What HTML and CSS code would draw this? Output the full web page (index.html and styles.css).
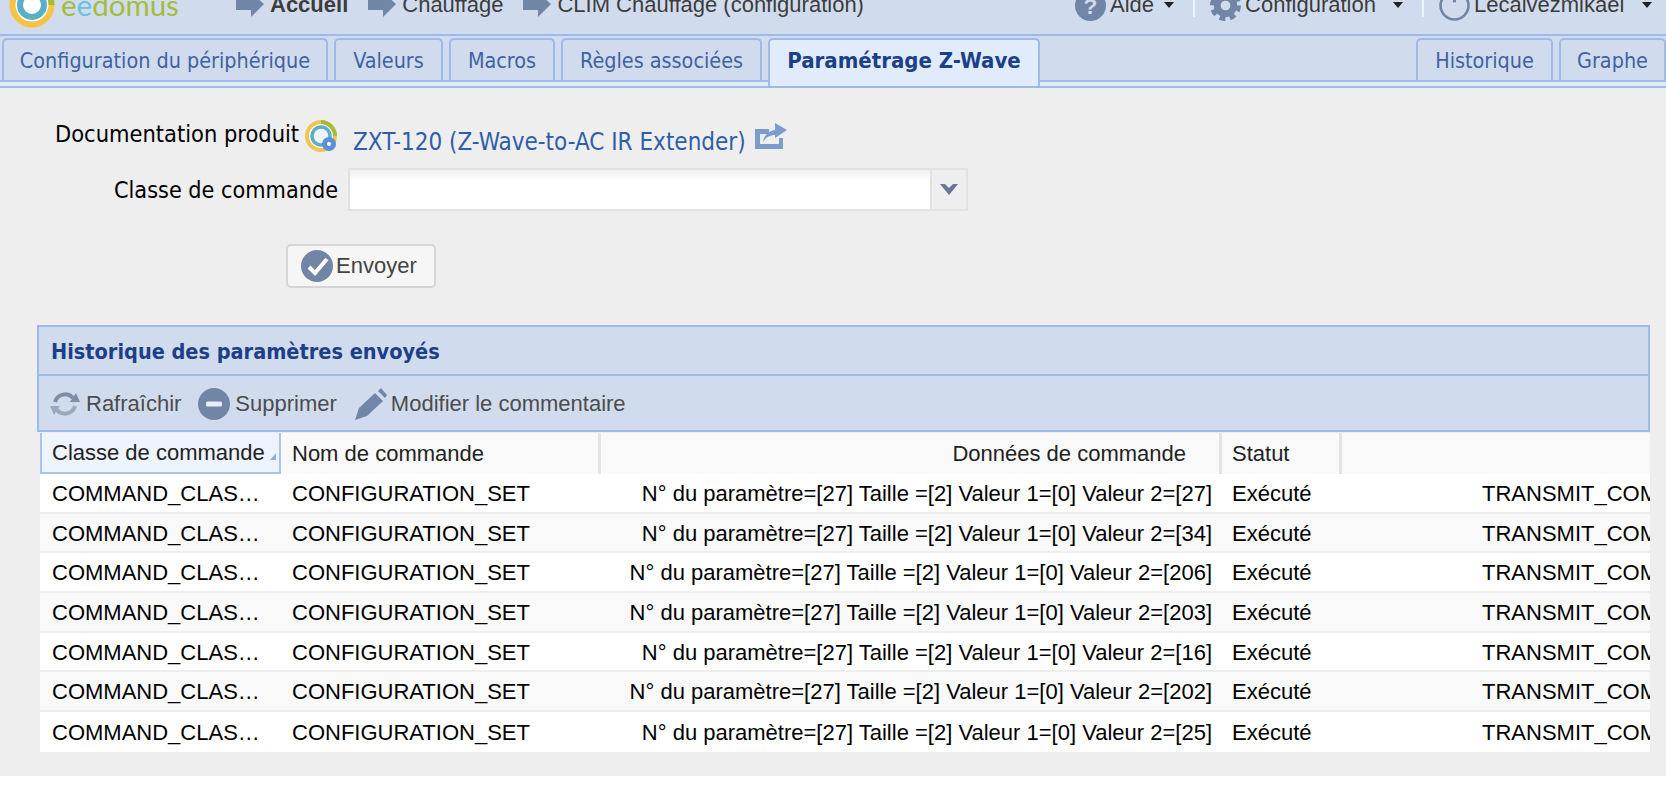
FILE: index.html
```html
<!DOCTYPE html>
<html lang="fr">
<head>
<meta charset="utf-8">
<title>Paramétrage Z-Wave</title>
<link rel="stylesheet" href="styles.css">
</head>
<body>
<header class="topbar">
  <div class="topbar-row">
    <svg class="logo" viewBox="0 0 46 46"><circle cx="23" cy="23" r="19.500" fill="#fff" stroke="#f5c445" stroke-width="6"/><path d="M23 3.500A19.500 19.500 0 0 1 42.500 23" fill="none" stroke="#a4bc3c" stroke-width="6"/><circle cx="23" cy="23" r="12" fill="#fff" stroke="#55b0c8" stroke-width="6"/></svg>
    <span class="brand">e<span class="brand-e">e</span>domus</span>
    <nav class="crumbs">
      <svg class="arrow" viewBox="0 0 28 24"><path d="M0 5H16V0L28 11 15 24V17H0Z"/></svg><b class="crumb">Accueil</b>
      <svg class="arrow" viewBox="0 0 28 24"><path d="M0 5H16V0L28 11 15 24V17H0Z"/></svg><span class="crumb">Chauffage</span>
      <svg class="arrow" viewBox="0 0 28 24"><path d="M0 5H16V0L28 11 15 24V17H0Z"/></svg><span class="crumb">CLIM Chauffage (configuration)</span>
    </nav>
    <div class="usermenu">
      <svg class="menu-icon" viewBox="0 0 30 30"><circle cx="15" cy="15" r="15" fill="#7186a6"/><text x="15" y="23" class="qmark">?</text></svg>
      <span class="menu-label">Aide</span><i class="caret caret-aide"></i><i class="divider"></i>
      <svg class="menu-icon" viewBox="0 0 32 32"><circle cx="16" cy="16" r="8.500" fill="none" stroke="#7186a6" stroke-width="7"/><circle cx="16" cy="16" r="13.500" fill="none" stroke="#7186a6" stroke-width="5" stroke-dasharray="6 4.600"/></svg>
      <span class="menu-label">Configuration</span><i class="caret caret-conf"></i><i class="divider"></i>
      <svg class="menu-icon" viewBox="0 0 30 30"><circle cx="15" cy="15" r="13.500" fill="none" stroke="#7186a6" stroke-width="2.500"/><path d="M15 7v5" stroke="#7186a6" stroke-width="3"/></svg>
      <span class="menu-label">Lecalvezmikael</span><i class="caret caret-user"></i>
    </div>
  </div>
</header>

<div class="tabstrip">
  <div class="tabs">
    <a class="tab tab-config">Configuration du périphérique</a>
    <a class="tab tab-values">Valeurs</a>
    <a class="tab tab-macros">Macros</a>
    <a class="tab tab-rules">Règles associées</a>
    <a class="tab tab-active">Paramétrage Z-Wave</a>
    <span class="tab-spacer"></span>
    <a class="tab tab-history">Historique</a>
    <a class="tab tab-graph">Graphe</a>
  </div>
</div>

<main class="content">
  <div class="form-row doc-row">
    <span class="doc-label">Documentation produit</span>
    <svg class="doc-icon" viewBox="0 0 32 32"><circle cx="16" cy="16" r="14" fill="#fff" stroke="#f0c64c" stroke-width="4"/><path d="M16 2A14 14 0 0 1 30 16" fill="none" stroke="#a4bc3c" stroke-width="4"/><circle cx="16" cy="16" r="9" fill="#eef3f8" stroke="#5aaec6" stroke-width="3.500"/><circle cx="24" cy="24" r="7" fill="#5b8fd8"/><circle cx="24" cy="24" r="2" fill="#fff"/></svg>
    <a class="doc-link">ZXT-120 (Z-Wave-to-AC IR Extender)</a>
    <svg class="share-icon" viewBox="0 0 32 26"><path d="M0 6H14V11H5V21H24V15H28V26H0Z"/><path d="M8 19C9 12 14 8 20 7V0L32 7 20 15V12C15 12 11 14 8 19Z"/></svg>
  </div>
  <div class="form-row class-row">
    <label class="class-label">Classe de commande</label>
    <div class="combo">
      <div class="combo-input"></div>
      <div class="combo-trigger"><svg class="chevron" viewBox="0 0 18 11"><path d="M0 0H5L9 4 13 0H18L9 11Z"/></svg></div>
    </div>
  </div>
  <button class="send" type="button">
    <svg class="send-icon" viewBox="0 0 32 32"><circle cx="16" cy="16" r="16" fill="#7186a6"/><path d="M8 17L14 23 26 9" fill="none" stroke="#fff" stroke-width="4"/></svg>
    <span>Envoyer</span>
  </button>

  <section class="panel">
    <h2 class="panel-title">Historique des paramètres envoyés</h2>
    <div class="toolbar">
      <svg class="tool-icon icon-refresh" viewBox="0 0 30 30"><path d="M5 13A10.500 10.500 0 0 1 23 9" fill="none" stroke="#7f8ea6" stroke-width="4"/><path d="M20 13H30L26 4Z" fill="#7f8ea6"/><path d="M25 17A10.500 10.500 0 0 1 7 21" fill="none" stroke="#9aa8bd" stroke-width="4"/><path d="M0 17H10L4 26Z" fill="#9aa8bd"/></svg>
      <span class="tool-label label-refresh">Rafraîchir</span>
      <svg class="tool-icon icon-delete" viewBox="0 0 32 32"><circle cx="16" cy="16" r="16" fill="#7186a6"/><rect x="8" y="13.500" width="16" height="5" rx="1.500" fill="#e8edf5"/></svg>
      <span class="tool-label label-delete">Supprimer</span>
      <svg class="tool-icon icon-edit" viewBox="0 0 32 32"><path d="M0 32L4 20 20 5 28 13 12 28Z" fill="#7186a6"/><path d="M23 3L26 0 32 7 30 10Z" fill="#7186a6"/></svg>
      <span class="tool-label label-edit">Modifier le commentaire</span>
    </div>
    <div class="grid">
      <div class="grid-head">
        <div class="hcell hcell-sorted">Classe de commande<i class="sort-mark"></i></div>
        <div class="hcell">Nom de commande</div>
        <div class="hcell hcell-data">Données de commande</div>
        <div class="hcell hcell-status">Statut</div>
        <div class="hcell hcell-last"></div>
      </div>
      <div class="grid-row"><div class="cell">COMMAND_CLAS…</div><div class="cell">CONFIGURATION_SET</div><div class="cell cell-data">N° du paramètre=[27] Taille =[2] Valeur 1=[0] Valeur 2=[27]</div><div class="cell cell-status">Exécuté</div><div class="cell cell-last">TRANSMIT_COMPLETE_OK</div></div>
      <div class="grid-row"><div class="cell">COMMAND_CLAS…</div><div class="cell">CONFIGURATION_SET</div><div class="cell cell-data">N° du paramètre=[27] Taille =[2] Valeur 1=[0] Valeur 2=[34]</div><div class="cell cell-status">Exécuté</div><div class="cell cell-last">TRANSMIT_COMPLETE_OK</div></div>
      <div class="grid-row"><div class="cell">COMMAND_CLAS…</div><div class="cell">CONFIGURATION_SET</div><div class="cell cell-data">N° du paramètre=[27] Taille =[2] Valeur 1=[0] Valeur 2=[206]</div><div class="cell cell-status">Exécuté</div><div class="cell cell-last">TRANSMIT_COMPLETE_OK</div></div>
      <div class="grid-row"><div class="cell">COMMAND_CLAS…</div><div class="cell">CONFIGURATION_SET</div><div class="cell cell-data">N° du paramètre=[27] Taille =[2] Valeur 1=[0] Valeur 2=[203]</div><div class="cell cell-status">Exécuté</div><div class="cell cell-last">TRANSMIT_COMPLETE_OK</div></div>
      <div class="grid-row"><div class="cell">COMMAND_CLAS…</div><div class="cell">CONFIGURATION_SET</div><div class="cell cell-data">N° du paramètre=[27] Taille =[2] Valeur 1=[0] Valeur 2=[16]</div><div class="cell cell-status">Exécuté</div><div class="cell cell-last">TRANSMIT_COMPLETE_OK</div></div>
      <div class="grid-row"><div class="cell">COMMAND_CLAS…</div><div class="cell">CONFIGURATION_SET</div><div class="cell cell-data">N° du paramètre=[27] Taille =[2] Valeur 1=[0] Valeur 2=[202]</div><div class="cell cell-status">Exécuté</div><div class="cell cell-last">TRANSMIT_COMPLETE_OK</div></div>
      <div class="grid-row"><div class="cell">COMMAND_CLAS…</div><div class="cell">CONFIGURATION_SET</div><div class="cell cell-data">N° du paramètre=[27] Taille =[2] Valeur 1=[0] Valeur 2=[25]</div><div class="cell cell-status">Exécuté</div><div class="cell cell-last">TRANSMIT_COMPLETE_OK</div></div>
    </div>
  </section>
</main>
</body>
</html>
```
FILE: styles.css
```css
* { box-sizing: border-box; }
html, body { margin: 0; padding: 0; background: #fff; overflow: hidden; }
body { width: 1666px; height: 792px; font-family: "Liberation Sans", Arial, sans-serif; color: #000; }

/* top bar */
.topbar { height: 34px; background: #d0dcee; overflow: hidden; }
.topbar-row { display: flex; align-items: center; height: 40px; margin-top: -15px; padding-left: 9px; }
.logo { width: 46px; height: 46px; flex: none; }
.brand { font-family: "Lato", sans-serif; font-size: 29.500px; line-height: 40px; color: #a4bc3c; margin-left: 6px; width: 175px; flex: none; }
.brand-e { color: #6cc0e0; }
.crumbs { display: flex; align-items: center; flex: none; width: 839px; }
.arrow { width: 28px; height: 24px; fill: #7186a6; flex: none; }
.crumb { font-size: 22px; color: #3c3c3c; margin: 0 20px 0 6px; }
.usermenu { display: flex; align-items: center; flex: none; }
.menu-icon { width: 31px; height: 31px; flex: none; }
.qmark { font: bold 22px "Liberation Sans", sans-serif; fill: #d0dcee; text-anchor: middle; }
.menu-label { font-size: 22px; color: #3c3c3c; margin-left: 4px; }
.caret { width: 0; height: 0; border: 5px solid transparent; border-top: 6px solid #222; border-bottom: 0; flex: none; }
.caret-aide { margin-left: 10px; }
.caret-conf { margin-left: 17px; }
.caret-user { margin-left: 18px; }
.divider { width: 2px; height: 24px; background: #eef4fd; margin: 0 15px 0 19px; flex: none; }

/* tabs */
.tabstrip { height: 54px; padding-bottom: 4px; background: #e0ebfb; border-top: 2px solid #9dbbe6; border-bottom: 2px solid #9dbbe6; }
.tabs { display: flex; align-items: flex-start; height: 46px; padding: 2px 0 0 2px; background: #d0dcee; border-bottom: 2px solid #9dbbe6; }
.tab { flex: none; display: flex; align-items: center; justify-content: center; height: 42px; margin-right: 6px; border: 2px solid #9dbbe6; border-bottom: 0; border-radius: 5px 5px 0 0; font-family: "DejaVu Sans Condensed", "DejaVu Sans", sans-serif; font-size: 21.400px; color: #3f62a2; background: #d0dcee; }
.tab-config { width: 326px; }
.tab-values { width: 109px; }
.tab-macros { width: 106px; }
.tab-rules { width: 201px; }
.tab-active { width: 272px; height: 48px; margin-right: 0; padding-bottom: 6px; background: #e0ebfb; color: #1d3f87; font-weight: bold; font-size: 22px; }
.tab-spacer { flex: 1; }
.tab-history { width: 137px; }
.tab-graph { width: 107px; margin-right: 0; }

/* content */
.content { height: 688px; background: #eee; padding: 30px 16px 0 37px; }
.form-row { display: flex; align-items: center; font-family: "DejaVu Sans Condensed", "DejaVu Sans", sans-serif; }
.doc-row { height: 36px; padding-left: 18px; }
.doc-label { font-size: 23.400px; position: relative; top: -2px; }
.doc-icon { width: 32px; height: 32px; margin-left: 6px; flex: none; }
.doc-link { font-size: 24px; color: #2f5ea8; margin-left: 16px; position: relative; top: 6px; }
.share-icon { width: 32px; height: 26px; margin-left: 9px; fill: #7b9ccd; flex: none; }
.class-row { height: 43px; margin-top: 14px; padding-left: 77px; }
.class-label { font-size: 23.200px; width: 234px; flex: none; }
.combo { display: flex; width: 620px; height: 43px; border: 2px solid #e2e2e2; }
.combo-input { flex: 1; background: linear-gradient(#efefef, #fff 12px); }
.combo-trigger { width: 36px; display: flex; align-items: center; justify-content: center; background: #eee; border-left: 2px solid #e2e2e2; }
.chevron { width: 18px; height: 11px; fill: #66789a; }
.send { display: flex; align-items: center; margin: 33px 0 0 249px; width: 150px; height: 44px; padding: 0 0 0 13px; border: 2px solid #d5d5d5; border-radius: 5px; background: #f6f6f6; font-family: "Liberation Sans", sans-serif; font-size: 22px; color: #444; }
.send-icon { width: 32px; height: 32px; margin-right: 3px; flex: none; }

/* panel */
.panel { margin-top: 37px; width: 1613px; }
.panel-title { margin: 0; height: 50px; padding: 2px 0 0 12px; display: flex; align-items: center; background: #d0dcee; border: 2px solid #9dbbe6; border-bottom-width: 1px; font-family: "DejaVu Sans Condensed", "DejaVu Sans", sans-serif; font-size: 21.500px; font-weight: bold; color: #1d3f87; }
.toolbar { height: 57px; padding: 2px 0 0 11px; display: flex; align-items: center; background: #d0dcee; border: 2px solid #9dbbe6; border-top-width: 1px; }
.tool-icon { flex: none; height: 32px; width: 32px; }
.icon-refresh { width: 30px; height: 30px; }
.tool-label { font-size: 22px; color: #4c4c4c; margin-left: 6px; }
.label-refresh { margin-right: 17px; }
.label-delete { margin: 0 18px 0 5px; }
.label-edit { margin-left: 4px; }
.grid { margin: 1px 0 0 3px; overflow: hidden; }
.grid-head, .grid-row { display: grid; grid-template-columns: 241px 320px 621px 120px 308px; width: 1610px; }
.grid-head { height: 41px; background: #f9f9f9; }
.hcell { display: flex; align-items: center; padding-left: 11px; font-size: 22px; color: #222; border-right: 3px solid #e4e4e4; white-space: nowrap; }
.hcell-sorted { padding-left: 10px; background: #edf4fe; border: 2px solid #a9c5ee; border-top: 0; }
.sort-mark { width: 0; height: 0; margin-left: 5px; margin-top: 8px; border-style: solid; border-width: 0 0 7px 6px; border-color: transparent transparent #8fb0e2 transparent; }
.hcell-data { justify-content: flex-end; padding-right: 33px; }
.hcell-status { padding-left: 10px; }
.hcell-last { border-right: 0; }
.grid-row { height: 39.700px; padding-top: 2px; align-items: center; border-bottom: 2px solid #eee; background: #fff; }
.grid-row:nth-child(odd) { background: #f9f9f9; }
.grid-row:last-child { border-bottom: 0; }
.cell { padding-left: 11px; white-space: nowrap; overflow: hidden; font-size: 22px; }
.cell:first-child { padding-left: 12px; }
.cell-data { padding-right: 10px; text-align: right; }
.cell-status { padding-left: 10px; }
.cell-last { padding-left: 140px; }
```
